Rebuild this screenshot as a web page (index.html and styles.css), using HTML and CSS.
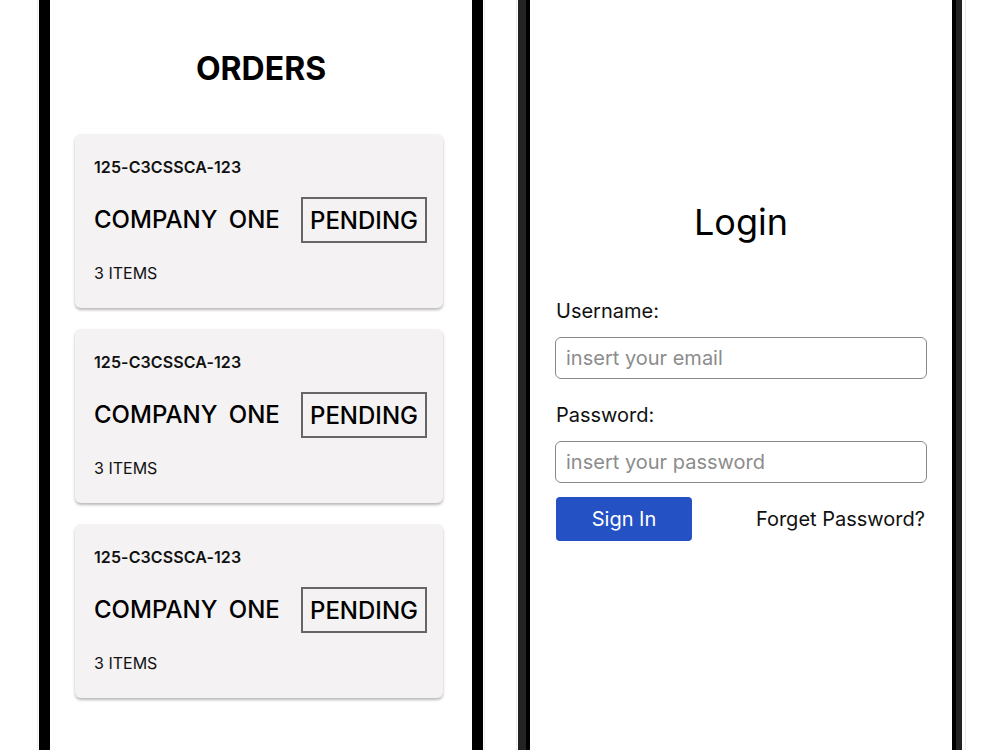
FILE: index.html
```html
<!DOCTYPE html>
<html lang="en">
<head>
<meta charset="utf-8">
<title>Orders and Login</title>
<link rel="stylesheet" href="styles.css">
</head>
<body>
<div class="stage">
  <section class="phone phone-orders">
    <h1 class="orders-title">ORDERS</h1>
    <div class="card-list">
      <article class="card">
        <div class="card-id">125-C3CSSCA-123</div>
        <div class="card-row">
          <span class="company">COMPANY ONE</span>
          <span class="status">PENDING</span>
        </div>
        <div class="items">3 ITEMS</div>
      </article>
      <article class="card">
        <div class="card-id">125-C3CSSCA-123</div>
        <div class="card-row">
          <span class="company">COMPANY ONE</span>
          <span class="status">PENDING</span>
        </div>
        <div class="items">3 ITEMS</div>
      </article>
      <article class="card">
        <div class="card-id">125-C3CSSCA-123</div>
        <div class="card-row">
          <span class="company">COMPANY ONE</span>
          <span class="status">PENDING</span>
        </div>
        <div class="items">3 ITEMS</div>
      </article>
    </div>
  </section>
  <section class="phone phone-login">
    <div class="login">
      <h2 class="login-title">Login</h2>
      <label class="field-label" for="user">Username:</label>
      <input class="field" id="user" type="text" placeholder="insert your email">
      <label class="field-label field-label-2" for="pass">Password:</label>
      <input class="field" id="pass" type="password" placeholder="insert your password">
      <div class="actions">
        <button class="signin" type="button">Sign In</button>
        <a class="forgot" href="#">Forget Password?</a>
      </div>
    </div>
  </section>
</div>
</body>
</html>
```
FILE: styles.css
```css
* { box-sizing: border-box; }
html, body {
  margin: 0;
  padding: 0;
  background: #fff;
  font-family: Inter, "Noto Sans", sans-serif;
  color: #111;
}
.stage {
  display: flex;
  gap: 35px;
  padding-left: 39px;
  height: 750px;
  overflow: hidden;
}
.phone {
  width: 444px;
  height: 750px;
  flex: none;
  background: #fff;
  outline: 1px solid #eeeeee;
  outline-offset: 1px;
}
.phone-orders {
  border-left: 11px solid #000;
  border-right: 11px solid #000;
}
.phone-login {
  border-left: 4px solid #000;
  border-right: 4px solid #000;
  box-shadow: -8px 0 0 #232323, 6px 0 0 #232323;
  width: 430px;
  margin-left: 8px;
  outline-offset: 9px;
}
.orders-title {
  margin: 0;
  padding-top: 52px;
  text-align: center;
  font-size: 32px;
  line-height: 34px;
  font-weight: 700;
  color: #000;
}
.card-list {
  display: flex;
  flex-direction: column;
  gap: 21px;
  margin-top: 48px;
  margin-left: 25px;
  width: 368px;
}
.card {
  background: #f4f2f3;
  border-radius: 6px;
  box-shadow: 0 2px 3px rgba(0,0,0,0.28);
  padding: 24px 16px 26px 19px;
  height: 174px;
}
.card-id {
  font-size: 16px;
  line-height: 18px;
  font-weight: 600;
  letter-spacing: 0.1px;
}
.card-row {
  display: flex;
  align-items: center;
  justify-content: space-between;
  margin-top: 21px;
}
.company {
  font-size: 24px;
  line-height: 30px;
  font-weight: 500;
  word-spacing: 5px;
  color: #000;
}
.status {
  display: flex;
  align-items: center;
  justify-content: center;
  height: 46px;
  width: 126px;
  border: 2px solid #666;
  font-size: 24px;
  font-weight: 500;
  color: #000;
}
.items {
  margin-top: 21px;
  font-size: 16px;
  line-height: 18px;
  font-weight: 400;
}
.login {
  display: flex;
  flex-direction: column;
  padding: 202px 25px 0 25px;
}
.login-title {
  margin: 0 0 58px 0;
  text-align: center;
  font-size: 36px;
  line-height: 40px;
  font-weight: 400;
  color: #000;
}
.field-label {
  font-size: 20px;
  line-height: 22px;
  padding-left: 1px;
  margin-bottom: 15px;
}
.field-label-2 { margin-top: 25px; }
.field {
  height: 42px;
  width: 100%;
  border: 1px solid #8a8a8a;
  border-radius: 6px;
  padding: 0 10px;
  font-family: Inter, "Noto Sans", sans-serif;
  font-size: 20px;
  color: #111;
  background: #fff;
}
.field::placeholder { color: #8c8c8c; }
.actions {
  display: flex;
  align-items: center;
  justify-content: space-between;
  margin-top: 14px;
  padding-left: 1px;
  padding-right: 2px;
}
.signin {
  width: 136px;
  height: 44px;
  border: none;
  border-radius: 4px;
  background: #2452c5;
  color: #fff;
  font-family: Inter, "Noto Sans", sans-serif;
  font-size: 20px;
  font-weight: 400;
}
.forgot {
  font-size: 20px;
  color: #111;
  text-decoration: none;
}
```
